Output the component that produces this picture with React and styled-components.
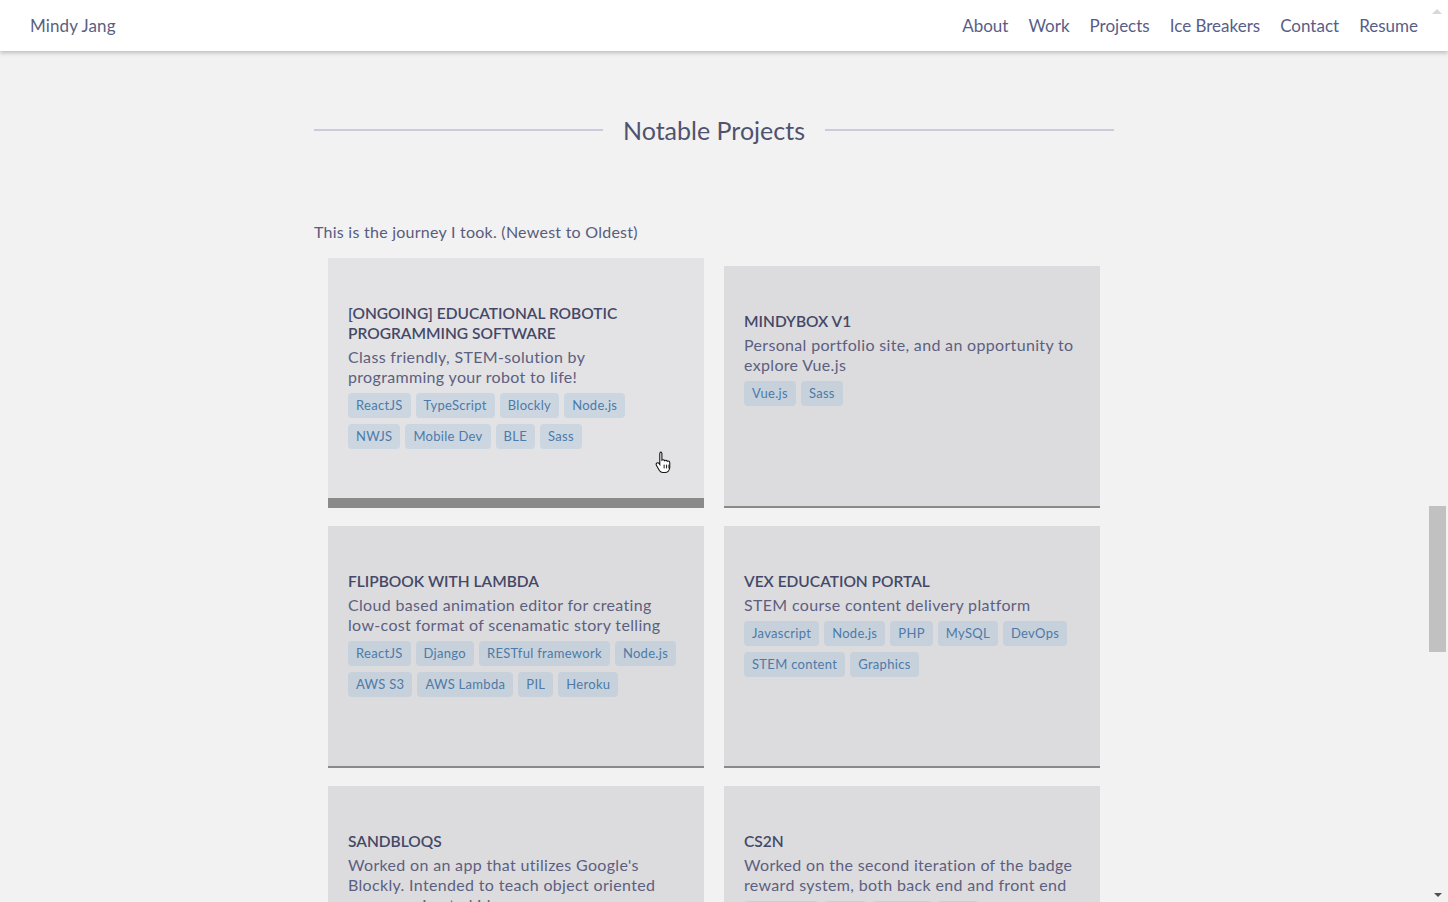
import React from "react";
import styled, { createGlobalStyle } from "styled-components";

const projects = [
  {
    title: "[ONGOING] EDUCATIONAL ROBOTIC PROGRAMMING SOFTWARE",
    text: "Class friendly, STEM-solution by programming your robot to life!",
    tags: ["ReactJS", "TypeScript", "Blockly", "Node.js", "NWJS", "Mobile Dev", "BLE", "Sass"],
    active: true,
  },
  {
    title: "MINDYBOX V1",
    text: "Personal portfolio site, and an opportunity to explore Vue.js",
    tags: ["Vue.js", "Sass"],
  },
  {
    title: "FLIPBOOK WITH LAMBDA",
    text: "Cloud based animation editor for creating low-cost format of scenamatic story telling",
    tags: ["ReactJS", "Django", "RESTful framework", "Node.js", "AWS S3", "AWS Lambda", "PIL", "Heroku"],
  },
  {
    title: "VEX EDUCATION PORTAL",
    text: "STEM course content delivery platform",
    tags: ["Javascript", "Node.js", "PHP", "MySQL", "DevOps", "STEM content", "Graphics"],
  },
  {
    title: "SANDBLOQS",
    text: "Worked on an app that utilizes Google's Blockly. Intended to teach object oriented programming to kids",
    tags: ["Javascript", "Blockly", "Sass"],
  },
  {
    title: "CS2N",
    text: "Worked on the second iteration of the badge reward system, both back end and front end",
    tags: ["Javascript", "PHP", "MySQL", "Sass"],
  },
];

const navLinks = ["About", "Work", "Projects", "Ice Breakers", "Contact", "Resume"];

function App() {
  return (
    <>
      <GlobalStyle />
      <Header>
        <Brand>Mindy Jang</Brand>
        <Nav>
          {navLinks.map((l) => (
            <NavLink key={l}>{l}</NavLink>
          ))}
        </Nav>
        <ArrowUp />
      </Header>
      <Main>
        <Section>
          <TitleRow>
            <Rule />
            <Heading>Notable Projects</Heading>
            <Rule />
          </TitleRow>
          <Intro>This is the journey I took. (Newest to Oldest)</Intro>
          <Grid>
            {projects.map((p) => (
              <Card key={p.title} active={p.active}>
                <CardTitle>{p.title}</CardTitle>
                <CardText>{p.text}</CardText>
                <Tags>
                  {p.tags.map((t) => (
                    <Tag key={t}>{t}</Tag>
                  ))}
                </Tags>
              </Card>
            ))}
          </Grid>
        </Section>
      </Main>
      <Thumb />
      <ArrowDown />
      <Cursor viewBox="0 0 16 22" width="17" height="24">
        <path
          d="M5 1.5c.9 0 1.5.6 1.5 1.5v6.2c.3-.3.7-.4 1.1-.4.7 0 1.2.4 1.4 1 .3-.3.7-.4 1.1-.4.7 0 1.2.4 1.4 1 .2-.2.6-.3.9-.3.9 0 1.5.7 1.5 1.6v4.3c0 2.8-2 4.9-4.7 4.9H7.4c-1.4 0-2.5-.7-3.3-1.9L1.3 14c-.5-.8-.2-1.7.5-2.1.7-.4 1.5-.2 2 .4l.7 1V3c0-.9.6-1.5 1.5-1.5z"
          fill="#fff"
          stroke="#111"
          strokeWidth="1"
        />
        <path d="M8.6 13.5v3.5M10.9 13.5v3.5M13.1 13.5v3.5" stroke="#111" strokeWidth="0.9" />
      </Cursor>
    </>
  );
}

export default App;

const GlobalStyle = createGlobalStyle`
  html, body {
    margin: 0;
    padding: 0;
    height: 902px;
    overflow: hidden;
    background: #f2f2f2;
    font-family: "Lato", "Liberation Sans", sans-serif;
    color: #52577a;
  }
  * { box-sizing: border-box; }
`;

const Header = styled.header`
  position: relative;
  z-index: 2;
  height: 51px;
  background: #fff;
  box-shadow: 0 2px 4px rgba(0, 0, 0, 0.22);
  display: flex;
  align-items: center;
  justify-content: space-between;
  padding: 0 30px 0 30px;
  font-size: 17px;
`;

const Brand = styled.div`
  color: #5a5f80;
  letter-spacing: 0.1px;
`;

const Nav = styled.nav`
  display: flex;
  gap: 20px;
`;

const NavLink = styled.a`
  color: #585d88;
  cursor: pointer;
`;

const ArrowUp = styled.div`
  position: absolute;
  right: 6px;
  top: 9px;
  width: 0;
  height: 0;
  border-left: 5px solid transparent;
  border-right: 5px solid transparent;
  border-bottom: 5px solid #d8d8d8;
`;

const ArrowDown = styled.div`
  position: fixed;
  right: 6px;
  bottom: 5px;
  width: 0;
  height: 0;
  border-left: 4px solid transparent;
  border-right: 4px solid transparent;
  border-top: 4px solid #505050;
`;

const Thumb = styled.div`
  position: fixed;
  right: 2px;
  top: 506px;
  width: 17px;
  height: 146px;
  background: #c1c1c1;
`;

const Cursor = styled.svg`
  position: fixed;
  left: 655px;
  top: 450px;
`;

const Main = styled.main`
  width: calc(100% - 20px);
`;

const Section = styled.section`
  width: 800px;
  margin: 0 auto;
  padding-top: 63px;
`;

const TitleRow = styled.div`
  display: flex;
  align-items: center;
  gap: 20px;
`;

const Rule = styled.div`
  flex: 1;
  height: 2px;
  background: #cacbdc;
`;

const Heading = styled.h2`
  margin: 0;
  font-size: 25px;
  font-weight: 400;
  color: #4f5370;
  line-height: 32px;
`;

const Intro = styled.p`
  margin: 76px 0 16px;
  font-size: 16px;
  line-height: 20px;
  letter-spacing: 0.25px;
  color: #585c7e;
`;

const Grid = styled.div`
  display: grid;
  grid-template-columns: 376px 376px;
  column-gap: 20px;
  row-gap: 18px;
  justify-content: center;
  align-items: end;
`;

const Card = styled.div`
  min-height: ${(p) => (p.active ? "250px" : "242px")};
  padding: 45px 26px 20px 20px;
  background: ${(p) => (p.active ? "#e3e3e5" : "#dcdcde")};
  border-bottom: ${(p) => (p.active ? "10px" : "2px")} solid #8a8a8a;
`;

const CardTitle = styled.h3`
  margin: 0;
  font-size: 15.5px;
  line-height: 20px;
  font-weight: 600;
  color: #444866;
`;

const CardText = styled.p`
  margin: 4px 0 6px;
  font-size: 16px;
  line-height: 20px;
  letter-spacing: 0.33px;
  color: #5c6080;
`;

const Tags = styled.div`
  display: flex;
  flex-wrap: wrap;
  gap: 6px 5px;
`;

const Tag = styled.span`
  height: 25px;
  line-height: 25px;
  padding: 0 8px;
  border-radius: 4px;
  font-size: 13px;
  letter-spacing: 0.3px;
  color: #4d7aa8;
  background: rgba(150, 185, 215, 0.3);
`;
